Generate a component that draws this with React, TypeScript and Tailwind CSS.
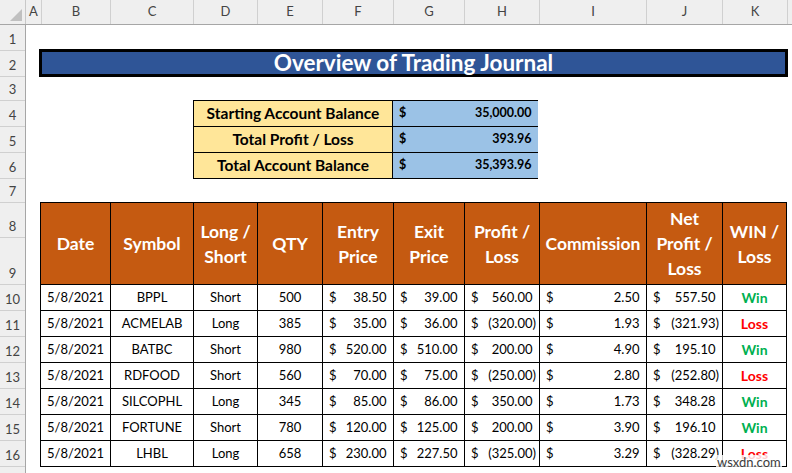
import React from "react";

const COLS: { l: string; w: string }[] = [
  { l: "A", w: "w-[16px]" },
  { l: "B", w: "w-[69px]" },
  { l: "C", w: "w-[83px]" },
  { l: "D", w: "w-[64px]" },
  { l: "E", w: "w-[65px]" },
  { l: "F", w: "w-[71px]" },
  { l: "G", w: "w-[71px]" },
  { l: "H", w: "w-[75px]" },
  { l: "I", w: "w-[107px]" },
  { l: "J", w: "w-[76px]" },
  { l: "K", w: "w-[65px]" },
];

const ROWS: { n: number; h: string; label: string }[] = [
  { n: 1, h: "h-[26px]", label: "1" },
  { n: 2, h: "h-[26px]", label: "2" },
  { n: 3, h: "h-[24px]", label: "3" },
  { n: 4, h: "h-[26px]", label: "4" },
  { n: 5, h: "h-[26px]", label: "5" },
  { n: 6, h: "h-[26px]", label: "6" },
  { n: 7, h: "h-[24px]", label: "7" },
  { n: 8, h: "h-[35px]", label: "8" },
  { n: 9, h: "h-[47px]", label: "9" },
  { n: 10, h: "h-[26px]", label: "10" },
  { n: 11, h: "h-[26px]", label: "11" },
  { n: 12, h: "h-[26px]", label: "12" },
  { n: 13, h: "h-[26px]", label: "13" },
  { n: 14, h: "h-[26px]", label: "14" },
  { n: 15, h: "h-[26px]", label: "15" },
  { n: 16, h: "h-[26px]", label: "16" },
  { n: 17, h: "h-[26px]", label: "" },
];

type Trade = [string, string, string, number, number, number, number, number, number, string];

const DATA: Trade[] = [
  ["5/8/2021", "BPPL", "Short", 500, 38.5, 39, 560, 2.5, 557.5, "Win"],
  ["5/8/2021", "ACMELAB", "Long", 385, 35, 36, -320, 1.93, -321.93, "Loss"],
  ["5/8/2021", "BATBC", "Short", 980, 520, 510, 200, 4.9, 195.1, "Win"],
  ["5/8/2021", "RDFOOD", "Short", 560, 70, 75, -250, 2.8, -252.8, "Loss"],
  ["5/8/2021", "SILCOPHL", "Long", 345, 85, 86, 350, 1.73, 348.28, "Win"],
  ["5/8/2021", "FORTUNE", "Short", 780, 120, 125, 200, 3.9, 196.1, "Win"],
  ["5/8/2021", "LHBL", "Long", 658, 230, 227.5, -325, 3.29, -328.29, "Loss"],
];

const HEADERS: string[][] = [
  ["Date"],
  ["Symbol"],
  ["Long /", "Short"],
  ["QTY"],
  ["Entry", "Price"],
  ["Exit", "Price"],
  ["Profit /", "Loss"],
  ["Commission"],
  ["Net", "Profit /", "Loss"],
  ["WIN /", "Loss"],
];

function fmt(v: number) {
  return Math.abs(v).toLocaleString("en-US", {
    minimumFractionDigits: 2,
    maximumFractionDigits: 2,
  });
}

function Money({ v, bold }: { v: number; bold?: boolean }) {
  const neg = v < 0;
  return (
    <div
      className={`flex h-full items-center justify-between pl-[6px] pr-[3px] ${
        bold ? "font-bold text-[12.5px]" : ""
      }`}
    >
      <span>$</span>
      <span>
        {neg ? `(${fmt(v)})` : fmt(v)}
        {neg ? null : <span className="invisible">)</span>}
      </span>
    </div>
  );
}

function Center({ children, className = "" }: { children: React.ReactNode; className?: string }) {
  return (
    <div className={`flex h-full items-center justify-center ${className}`}>{children}</div>
  );
}

export default function App() {
  return (
    <div className="relative h-[473px] w-[792px] overflow-hidden bg-white font-['Lato',sans-serif] text-[13px] text-black">
      {/* Column header */}
      <div className="flex h-[25px] border-b border-[#a6a6a6] bg-[#efefef] text-[13px] text-[#444]">
        <div className="relative w-[26px] shrink-0 border-r border-[#c8c8c8]">
          <svg className="absolute bottom-[3px] right-[3px]" width="12" height="12" viewBox="0 0 12 12">
            <polygon points="12,0 12,12 0,12" fill="#c0c0c0" />
          </svg>
        </div>
        {COLS.map((c) => (
          <div
            key={c.l}
            className={`${c.w} flex shrink-0 items-center justify-center border-r border-[#d0d0d0]`}
          >
            {c.l}
          </div>
        ))}
        <div className="flex-1" />
      </div>

      <div className="flex">
        {/* Row header */}
        <div className="flex w-[26px] shrink-0 flex-col border-r border-[#a6a6a6] bg-[#efefef] text-[13px] text-[#444]">
          {ROWS.map((r) => (
            <div
              key={r.n}
              className={`${r.h} flex shrink-0 items-end justify-center border-b border-[#d0d0d0] pb-[1px]`}
            >
              {r.label}
            </div>
          ))}
        </div>

        {/* Sheet content */}
        <div className="flex flex-1 flex-col">
          <div className="ml-[13px] mt-[24px] flex h-[28px] w-[749px] items-center justify-center border-[3px] border-black bg-[#2f5597] text-[22.5px] font-bold text-white">
            Overview of Trading Journal
          </div>

          <div className="ml-[167px] mt-[23px] grid w-[345px] grid-cols-[198px_145px] gap-px bg-black p-px font-bold">
            {[
              ["Starting Account Balance", 35000],
              ["Total Profit / Loss", 393.96],
              ["Total Account Balance", 35393.96],
            ].map(([label, v]) => (
              <React.Fragment key={label as string}>
                <div className="h-[25px] bg-[#ffe699] text-[15.5px]">
                  <Center>{label}</Center>
                </div>
                <div className="h-[25px] bg-[#9bc2e6]">
                  <Money v={v as number} bold />
                </div>
              </React.Fragment>
            ))}
          </div>

          <div className="ml-[14px] mt-[23px] grid w-[747px] grid-cols-[69px_82px_63px_64px_70px_70px_74px_106px_75px_63px] gap-px bg-black p-px">
            {HEADERS.map((h, i) => (
              <div
                key={i}
                className="flex h-[81px] flex-col items-center justify-center bg-[#c55a11] text-center text-[17.5px] font-bold leading-[25px] text-white"
              >
                {h.map((line) => (
                  <span key={line}>{line}</span>
                ))}
              </div>
            ))}
            {DATA.map((r, ri) => (
              <React.Fragment key={ri}>
                <div className="h-[25px] bg-white">
                  <Center>{r[0]}</Center>
                </div>
                <div className="h-[25px] bg-white">
                  <Center>{r[1]}</Center>
                </div>
                <div className="h-[25px] bg-white">
                  <Center>{r[2]}</Center>
                </div>
                <div className="h-[25px] bg-white">
                  <Center>{r[3]}</Center>
                </div>
                <div className="h-[25px] bg-white">
                  <Money v={r[4]} />
                </div>
                <div className="h-[25px] bg-white">
                  <Money v={r[5]} />
                </div>
                <div className="h-[25px] bg-white">
                  <Money v={r[6]} />
                </div>
                <div className="h-[25px] bg-white">
                  <Money v={r[7]} />
                </div>
                <div className="h-[25px] bg-white">
                  <Money v={r[8]} />
                </div>
                <div className="h-[25px] bg-white">
                  <Center
                    className={`text-[14px] font-bold ${
                      r[9] === "Win" ? "text-[#00b050]" : "text-[#ff0000]"
                    }`}
                  >
                    {r[9]}
                  </Center>
                </div>
              </React.Fragment>
            ))}
          </div>
        </div>
      </div>

      <span className="absolute left-[716px] top-[455px] bg-white/80 px-[1px] text-[13px] leading-[14px] text-[#3c3c3c]">
        wsxdn.com
      </span>
    </div>
  );
}
